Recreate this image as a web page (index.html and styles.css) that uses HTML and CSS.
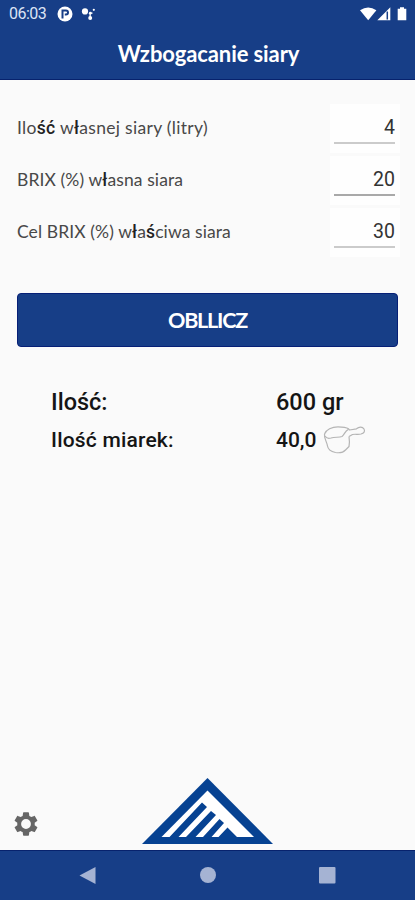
FILE: index.html
```html
<!DOCTYPE html>
<html lang="pl">

<head>
    <meta charset="UTF-8">
    <meta name="viewport" content="width=device-width, initial-scale=1.0">
    <title>Wzbogacanie siary</title>
    <link rel="stylesheet" href="styles.css">
</head>

<body>
    <header>
        <div class="status-bar">
            <span class="clock">06:03</span>
            <svg class="app-icon" width="16" height="16" viewBox="0 0 16 16">
                <circle cx="8" cy="8" r="7.5" fill="#fff" />
                <path d="M5.500 12.500V4.600h3.500a2 2 0 0 1 0 4H7.800" fill="none" stroke="#173e87" stroke-width="2" />
            </svg>
            <svg class="dots-icon" width="15" height="14" viewBox="0 0 15 14">
                <g fill="#fff">
                    <circle cx="4" cy="4.400" r="3.100" />
                    <circle cx="9.300" cy="6.200" r="1.400" />
                    <circle cx="9.200" cy="11" r="2" />
                    <circle cx="12.800" cy="2.800" r="1.100" />
                    <path d="M9 5.500h2.500v1.300H9zM8.500 7h1.300v3H8.500z" />
                </g>
            </svg>
            <svg class="signal-icons" width="48" height="16" viewBox="0 0 48 16">
                <g fill="#fff">
                    <path d="M0 4.300Q8.200-1.400 16.400 4.300L8.200 14.300z" />
                    <path d="M17.300 14.300L30.300 1.300V14.300z" />
                    <path d="M40 1.200h4v1.500h2.300v11.600h-8.600V2.700H40z" />
                </g>
                <path d="M27.300 5.500v8" stroke="#173e87" stroke-width="1.500" />
            </svg>
        </div>
        <h1>Wzbogacanie siary</h1>
    </header>

    <main>
        <form class="form">
            <div class="row">
                <label class="spaced" for="amount">Ilo<b>ść</b> w<b>ł</b>asnej siary (litry)</label>
                <div class="field"><input type="text" id="amount" value="4"></div>
            </div>
            <div class="row">
                <label for="brix">BRIX (%) w<b>ł</b>asna siara</label>
                <div class="field dark"><input type="text" id="brix" value="20"></div>
            </div>
            <div class="row">
                <label for="target">Cel BRIX (%) w<b>ł</b>a<b>ś</b>ciwa siara</label>
                <div class="field"><input type="text" id="target" value="30"></div>
            </div>
            <button type="button">OBLLICZ</button>
        </form>

        <div class="results">
            <div class="result big">
                <span class="name">Ilość:</span>
                <span>600 gr</span>
            </div>
            <div class="result">
                <span class="name wide">Ilość miarek:</span>
                <span class="scoops">40,0</span>
                <svg width="44" height="30" viewBox="0 0 44 30">
                    <g fill="none" stroke="#b5b5b5" stroke-width="1.200" stroke-linejoin="round">
                        <path d="M1.500 9C3 4.500 9 1.800 15 1.800c4 0 8 .2 10.500 2l1 1.200 7-1.200c2.500-2.300 6-2.300 7.500.2 1.300 2.500 0 4-3 5-3 .8-6-.2-8.500.5L26 11.500" />
                        <path d="M2 11c1 1.800 3.500 2.800 6 2 4-1.500 8 0 11-1.500 2.500-1.800 2.500-5 6.500-7.200" />
                        <path d="M1.500 9c-.8 4 2.500 8 3 12 .5 3.500 3.500 5.500 8 6.500 5 .8 8-.2 10-2.500l3.500-3.500c.8-3.500.5-6.500 0-10" />
                    </g>
                </svg>
            </div>
        </div>
    </main>

    <footer>
        <svg class="settings" width="28" height="28" viewBox="0 0 24 24">
            <path fill="#666" d="M19.430 12.980c.04-.32.070-.64.070-.98s-.03-.66-.07-.98l2.110-1.650c.19-.15.24-.42.120-.64l-2-3.460c-.12-.22-.39-.3-.61-.22l-2.490 1c-.52-.4-1.080-.73-1.690-.98l-.38-2.650C14.460 2.180 14.250 2 14 2h-4c-.25 0-.46.180-.49.420l-.38 2.650c-.61.250-1.170.590-1.690.980l-2.490-1c-.23-.09-.49 0-.61.220l-2 3.460c-.13.220-.07.490.120.640l2.110 1.650c-.04.320-.07.650-.07.980s.03.660.070.980l-2.110 1.650c-.19.150-.24.420-.12.640l2 3.460c.12.220.390.300.610.220l2.490-1c.52.400 1.080.730 1.690.980l.38 2.650c.03.240.240.420.490.420h4c.25 0 .46-.18.490-.42l.38-2.650c.61-.25 1.170-.59 1.690-.98l2.490 1c.23.090.490 0 .61-.22l2-3.460c.12-.22.070-.49-.12-.64l-2.110-1.650zM12 16.200A4.200 4.200 0 1 1 12 7.800a4.200 4.200 0 0 1 0 8.400z" />
        </svg>
        <svg class="logo" width="131" height="66" viewBox="0 0 131 66">
            <path fill="#064292" d="M65.500 0L131 66H0z" />
            <path fill="#fff" d="M65.500 12.500L112 59H19.500z" />
            <path fill="#064292" d="M60 24.500l5 4.500L36.500 59h-9zM69 33l5 4-20.500 22H44zM77.500 41l4.500 4-12.500 14H61zM85.500 49.500L95 59H76.500z" />
        </svg>
    </footer>

    <nav>
        <svg width="415" height="49" viewBox="0 0 415 49">
            <g fill="#a5b3d3">
                <path d="M79.500 24.500L95.500 16v17z" />
                <circle cx="208" cy="24" r="8" />
                <rect x="319" y="16" width="16.500" height="16.500" rx="1" />
            </g>
        </svg>
    </nav>
</body>

</html>
```

FILE: styles.css
```css
* {
    box-sizing: border-box;
}

body {
    margin: 0;
    height: 900px;
    display: flex;
    flex-direction: column;
    background-color: #fafafa;
    font-family: Roboto, sans-serif;
    color: #151515;
    overflow: hidden;
}

header {
    height: 80px;
    background-color: #173e87;
    border-bottom: 1px solid #07226d;
    color: white;
}

.status-bar {
    display: flex;
    align-items: center;
    height: 27px;
    padding: 0 7px 0 9px;
}

.clock {
    width: 48px;
    font-size: 16px;
    letter-spacing: -0.5px;
    color: #dce4f5;
}

.dots-icon {
    margin-left: 8px;
}

.signal-icons {
    margin-left: auto;
}

h1 {
    margin: 12px 0 0 2px;
    text-align: center;
    font-family: Lato, sans-serif;
    font-size: 22px;
    line-height: 30px;
    font-weight: bold;
    letter-spacing: -0.1px;
}

main {
    flex: 1;
}

.form {
    padding: 22px 17px 0;
}

.row {
    display: flex;
    justify-content: space-between;
    align-items: center;
    height: 52px;
}

label {
    font-family: Lato, sans-serif;
    font-size: 17.5px;
    line-height: 24px;
    letter-spacing: 0.1px;
    color: #484848;
    white-space: nowrap;
}

label.spaced {
    letter-spacing: 0.3px;
}

label b {
    font-family: Roboto, sans-serif;
    font-weight: 500;
    color: #222;
}

/* biale tlo pod polem */
.field {
    width: 70px;
    height: 49px;
    padding: 7px 5px 0 4px;
    margin-right: -2px;
    background-color: #fefefe;
}

.field input {
    display: block;
    width: 61px;
    height: 33px;
    padding: 3px 0 0;
    border: none;
    border-bottom: 2px solid #cbcbcb;
    background: none;
    text-align: right;
    font-family: Roboto, sans-serif;
    font-size: 19.5px;
    color: #333;
}

.field.dark input {
    border-color: #a9a9a9;
}

button {
    display: block;
    width: 381px;
    height: 54px;
    margin-top: 35px;
    border: 1px solid #061f76;
    border-radius: 4px;
    background-color: #173e87;
    color: white;
    font-family: Lato, sans-serif;
    font-size: 21.5px;
    font-weight: bold;
    letter-spacing: -1.2px;
}

.results {
    padding: 35px 0 0 51px;
}

.result {
    display: flex;
    align-items: center;
    height: 37px;
    font-size: 21px;
    font-weight: 500;
    white-space: nowrap;
}

.result.big {
    height: 39px;
    font-size: 23.5px;
}

.name {
    width: 225px;
}

.name.wide {
    letter-spacing: 0.2px;
}

.scoops {
    width: 47px;
}

footer {
    display: flex;
    align-items: flex-end;
    height: 73px;
    padding-bottom: 6px;
}

.settings {
    margin: 0 102px 6px 12px;
}

.logo {
    display: block;
}

nav {
    height: 50px;
    background-color: #173e87;
    border-top: 1px solid #07226d;
}

nav svg {
    display: block;
}
```
